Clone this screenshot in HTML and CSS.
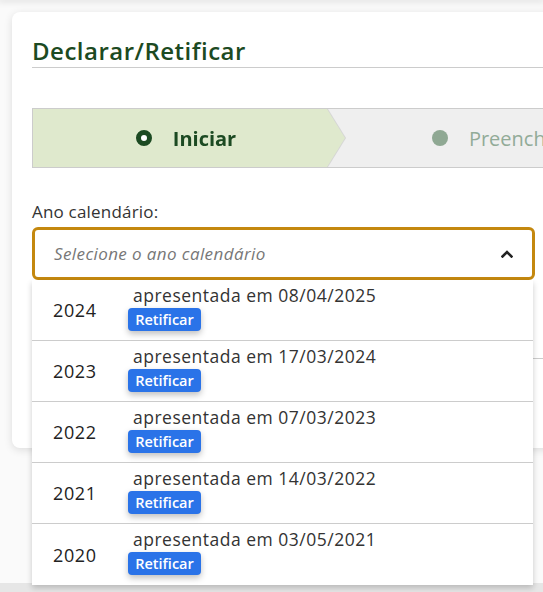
FILE: index.html
```html
<!DOCTYPE html>
<html lang="pt-BR">
<head>
    <meta charset="UTF-8">
    <meta name="viewport" content="width=device-width, initial-scale=1.0">
    <title>Declarar/Retificar</title>
    <link rel="stylesheet" href="styles.css">
</head>
<body>
    <div class="topbar"></div>

    <main class="page">
        <section class="card">
            <h1 class="title">Declarar/Retificar</h1>

            <div class="stepper">
                <div class="step-wrap">
                    <div class="step step-active">
                        <span class="dot dot-active"></span>
                        <span class="step-label">Iniciar</span>
                    </div>
                </div>
                <div class="step step-next">
                    <span class="dot dot-next"></span>
                    <span class="step-label">Preencher</span>
                </div>
            </div>

            <label class="field-label" for="ano">Ano calendário:</label>
            <div class="select-wrap">
                <div class="select" id="ano">
                    <span class="placeholder">Selecione o ano calendário</span>
                    <svg class="caret" width="12" height="8" viewBox="0 0 12 8">
                        <path d="M1.5 6.5 L6 2 L10.5 6.5" fill="none" stroke="#222" stroke-width="2.6" stroke-linecap="square"/>
                    </svg>
                </div>

                <ul class="options">
                    <li class="option">
                        <span class="year">2024</span>
                        <div class="info">
                            <span class="sent">apresentada em 08/04/2025</span>
                            <button class="btn">Retificar</button>
                        </div>
                    </li>
                    <li class="option">
                        <span class="year">2023</span>
                        <div class="info">
                            <span class="sent">apresentada em 17/03/2024</span>
                            <button class="btn">Retificar</button>
                        </div>
                    </li>
                    <li class="option">
                        <span class="year">2022</span>
                        <div class="info">
                            <span class="sent">apresentada em 07/03/2023</span>
                            <button class="btn">Retificar</button>
                        </div>
                    </li>
                    <li class="option">
                        <span class="year">2021</span>
                        <div class="info">
                            <span class="sent">apresentada em 14/03/2022</span>
                            <button class="btn">Retificar</button>
                        </div>
                    </li>
                    <li class="option">
                        <span class="year">2020</span>
                        <div class="info">
                            <span class="sent">apresentada em 03/05/2021</span>
                            <button class="btn">Retificar</button>
                        </div>
                    </li>
                </ul>
            </div>

            <hr class="divider">
        </section>
    </main>

    <footer class="footer"></footer>
</body>
</html>
```

FILE: styles.css
```css
body {
    margin: 0;
    width: 543px;
    height: 592px;
    overflow: hidden;
    background: #fafafa;
    font-family: "Open Sans", Lato, sans-serif;
    color: #333;
}
.topbar {
    height: 0;
    box-shadow: 0 0 6px 2px rgba(0, 0, 0, 0.12);
}
.page {
    height: 571px;
    padding: 12px 0 0 12px;
}
.card {
    width: 620px;
    height: 436px;
    box-sizing: border-box;
    padding: 23px 0 0 20px;
    background: #fff;
    border-radius: 8px;
    box-shadow: 0 2px 8px rgba(0, 0, 0, 0.12);
}
.title {
    margin: 0;
    padding-bottom: 1px;
    font-size: 24px;
    line-height: 31px;
    font-weight: 600;
    letter-spacing: 0.5px;
    color: #1c4a22;
    border-bottom: 1px solid #ccc;
}

/* steps */
.stepper {
    display: flex;
    margin-top: 40px;
    height: 58px;
    background: #efefef;
    border: 1px solid #ccc;
    border-right: 0;
}
.step-wrap {
    filter: drop-shadow(1px 0 0 #d4d4d4);
    z-index: 1;
}
.step {
    display: flex;
    align-items: center;
    justify-content: center;
    gap: 21px;
    height: 100%;
    font-size: 20px;
}
.step-active {
    width: 312px;
    padding-right: 6px;
    box-sizing: border-box;
    background: #dfe9cd;
    clip-path: polygon(0 0, calc(100% - 18px) 0, 100% 50%, calc(100% - 18px) 100%, 0 100%);
    font-weight: 700;
    color: #1c4a22;
}
.step-next {
    width: 300px;
    padding-left: 20px;
    color: #92ab98;
}
.dot {
    width: 16px;
    height: 16px;
    border-radius: 50%;
    box-sizing: border-box;
}
.dot-active {
    border: 5px solid #1c4a22;
    background: #fff;
}
.dot-next {
    background: #8fa893;
}

/* select */
.field-label {
    display: block;
    margin-top: 33px;
    font-size: 17px;
    line-height: 22px;
    font-weight: 500;
    letter-spacing: 0.2px;
    color: #333;
}
.select-wrap {
    position: relative;
    width: 503px;
    margin-top: 4px;
}
.select {
    display: flex;
    align-items: center;
    justify-content: space-between;
    height: 53px;
    box-sizing: border-box;
    padding: 0 19px 0 19px;
    border: 3px solid #c4880f;
    border-radius: 6px;
}
.placeholder {
    font-size: 17px;
    font-style: italic;
    letter-spacing: 0.4px;
    color: #777;
}
.options {
    position: absolute;
    top: 53px;
    left: 0;
    width: 501px;
    margin: 0;
    padding: 0;
    list-style: none;
    background: #fff;
    box-shadow: 0 3px 6px rgba(0, 0, 0, 0.2);
    z-index: 2;
}
.option {
    display: flex;
    align-items: center;
    height: 61px;
    box-sizing: border-box;
    border-bottom: 1px solid #ccc;
}
.option:last-child {
    border-bottom: 0;
}
.year {
    width: 80px;
    padding-left: 21px;
    font-size: 18px;
    letter-spacing: 0.6px;
    color: #222;
}
.info {
    display: flex;
    flex-direction: column;
    align-items: flex-start;
    gap: 2px;
    margin-top: -6px;
}
.sent {
    font-size: 17.5px;
    letter-spacing: 0.5px;
    color: #333;
    line-height: 22px;
}
.btn {
    margin-left: -5px;
    width: 73px;
    height: 23px;
    padding: 0;
    border: 0;
    border-radius: 4px;
    background: #2a73e8;
    color: #fff;
    font-family: inherit;
    font-size: 14.5px;
    font-weight: 600;
    box-shadow: 0 3px 6px rgba(0, 0, 0, 0.25);
}
.divider {
    margin: 78px 0 0;
    border: 0;
    border-top: 1px solid #ccc;
}

.footer {
    height: 9px;
    background: #e6e6e6;
}
```
